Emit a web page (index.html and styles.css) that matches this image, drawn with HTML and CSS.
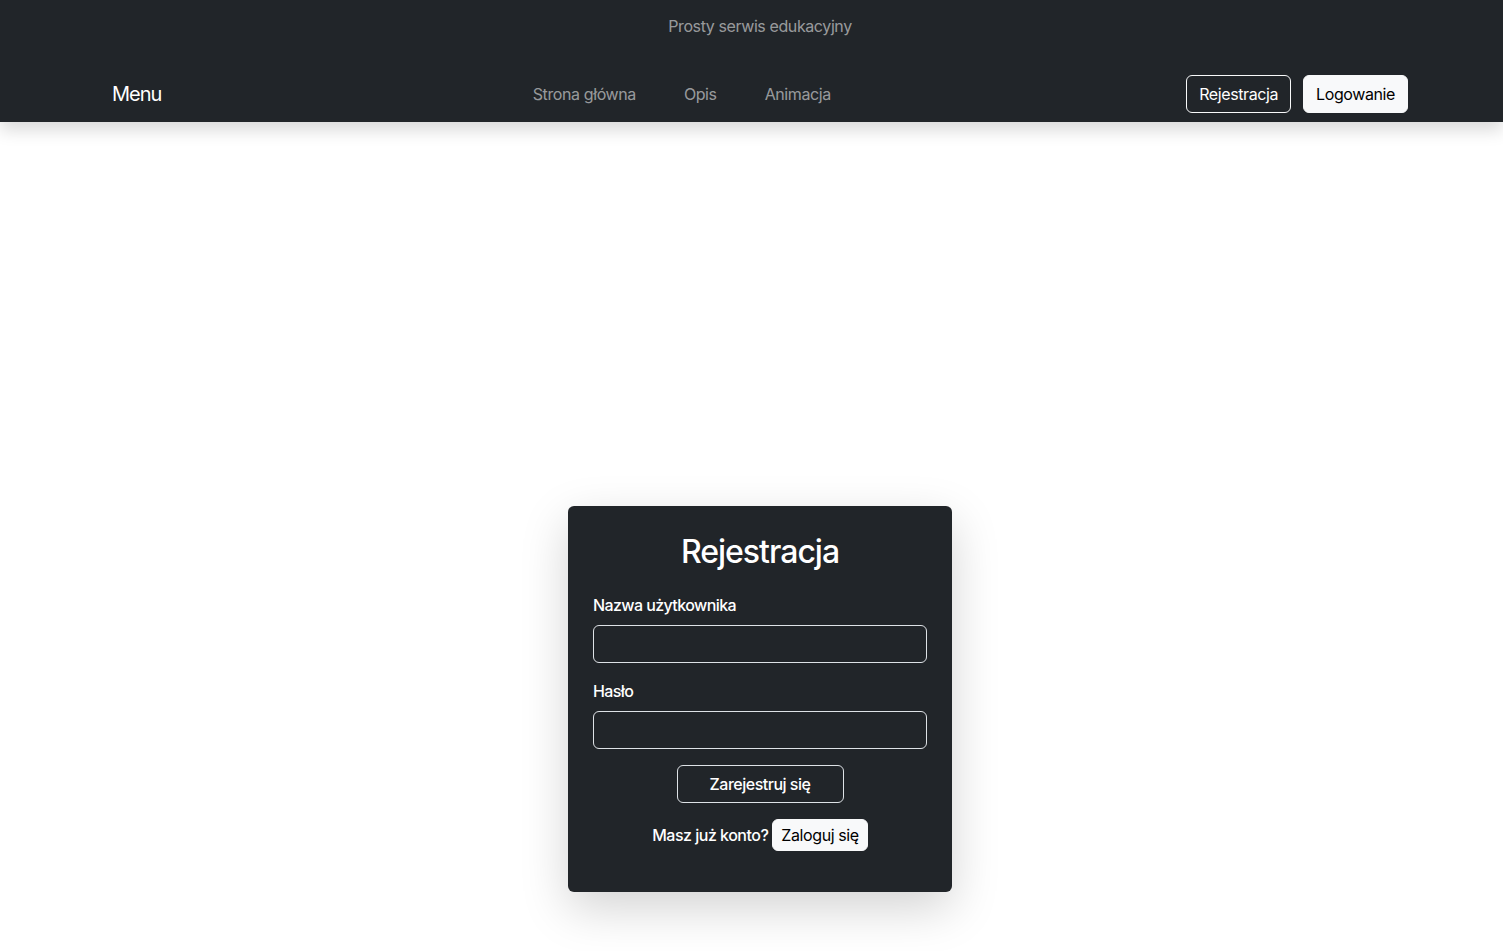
FILE: index.html
```html
<!DOCTYPE html>
<html lang="pl">
<head>
<meta charset="utf-8">
<title>Rejestracja</title>
<link rel="stylesheet" href="styles.css">
</head>
<body>
<header class="site-header">
  <div class="tagline">Prosty serwis edukacyjny</div>
  <nav class="navbar">
    <a class="brand" href="#">Menu</a>
    <ul class="nav-links">
      <li><a href="#">Strona główna</a></li>
      <li><a href="#">Opis</a></li>
      <li><a href="#">Animacja</a></li>
    </ul>
    <div class="nav-actions">
      <a class="btn btn-outline" href="#">Rejestracja</a>
      <a class="btn btn-light" href="#">Logowanie</a>
    </div>
  </nav>
</header>
<main class="main">
  <form class="card">
    <h2 class="card-title">Rejestracja</h2>
    <label class="label" for="user">Nazwa użytkownika</label>
    <input class="input" id="user" type="text">
    <label class="label" for="pass">Hasło</label>
    <input class="input" id="pass" type="password">
    <div class="submit-row">
      <button class="btn btn-outline btn-submit" type="button">Zarejestruj się</button>
    </div>
    <div class="login-row">
      <span>Masz już konto?</span>
      <a class="btn btn-light btn-small" href="#">Zaloguj się</a>
    </div>
  </form>
</main>
</body>
</html>
```
FILE: styles.css
```css
* { box-sizing: border-box; }
html, body { margin: 0; padding: 0; }
body {
  font-family: Inter, "Noto Sans", "Liberation Sans", sans-serif;
  font-size: 16px;
  line-height: 1.5;
  letter-spacing: -0.4px;
  color: #212529;
  background: #fff;
  height: 951px;
  overflow: hidden;
}
a { text-decoration: none; }

.site-header {
  background: #212529;
  box-shadow: 0 8px 16px rgba(0,0,0,0.15);
  position: relative;
  z-index: 1;
}
.tagline {
  height: 66px;
  padding-top: 14px;
  padding-left: 17px;
  text-align: center;
  color: rgba(255,255,255,0.55);
  font-size: 16px;
  line-height: 24px;
}
.navbar {
  display: flex;
  align-items: center;
  height: 56px;
  padding: 0 95px 0 112px;
}
.brand {
  color: #fff;
  font-size: 20px;
  line-height: 30px;
  margin-right: 16px;
  letter-spacing: -1px;
}
.nav-links {
  list-style: none;
  margin: 0 auto;
  padding: 0;
  display: flex;
  gap: 48px;
}
.nav-links a {
  color: rgba(255,255,255,0.55);
  font-size: 16px;
}
.nav-actions {
  display: flex;
  gap: 12px;
}
.btn {
  display: inline-block;
  font-family: inherit;
  font-size: 16px;
  line-height: 24px;
  letter-spacing: -0.4px;
  padding: 6px 12px;
  border-radius: 6px;
  border: 1px solid transparent;
  cursor: pointer;
  background: transparent;
}
.btn-outline {
  color: #fff;
  border-color: #f8f9fa;
}
.btn-light {
  background: #f8f9fa;
  border-color: #f8f9fa;
  color: #000;
}

.main {
  display: flex;
  justify-content: center;
  padding-top: 384px;
  padding-left: 17px;
}
.card {
  width: 384px;
  height: 386px;
  background: #212529;
  border-radius: 6px;
  padding: 20px 25px 25px;
  box-shadow: 0 16px 48px rgba(0,0,0,0.175);
  color: #fff;
  display: flex;
  flex-direction: column;
}
.card-title {
  margin: 7px 0 22px;
  text-align: center;
  font-size: 32px;
  line-height: 38px;
  font-weight: 500;
  letter-spacing: -1px;
}
.label {
  display: block;
  font-size: 16px;
  line-height: 24px;
  font-weight: 500;
  letter-spacing: -0.6px;
  margin-bottom: 8px;
}
.input {
  display: block;
  width: 100%;
  height: 38px;
  background: transparent;
  border: 1px solid #dee2e6;
  border-radius: 6px;
  color: #fff;
  font: inherit;
  padding: 6px 12px;
  margin-bottom: 16px;
}
.submit-row {
  display: flex;
  justify-content: center;
}
.btn-submit {
  width: 167px;
  font-weight: 500;
  letter-spacing: -0.5px;
  border-color: #dee2e6;
}
.login-row {
  margin-top: 16px;
  display: flex;
  justify-content: center;
  align-items: center;
  gap: 4px;
  font-weight: 500;
  letter-spacing: -0.5px;
}
.btn-small {
  padding: 3px 8px;
  line-height: 24px;
  font-weight: 400;
  border-radius: 6px;
}
```
